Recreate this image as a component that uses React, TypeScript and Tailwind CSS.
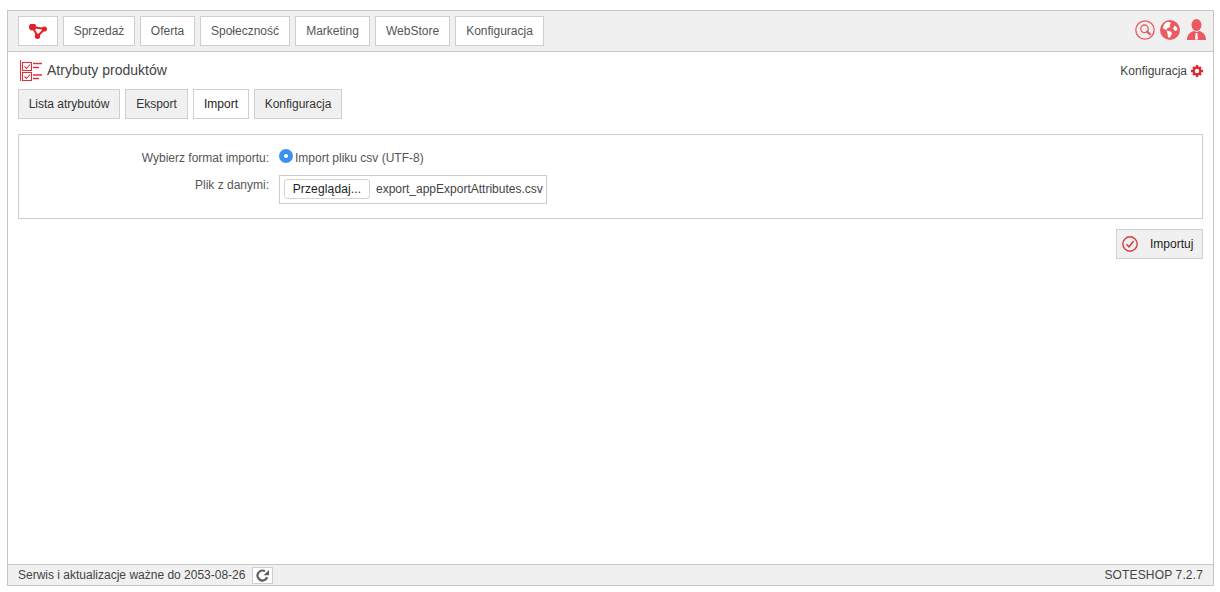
import React from 'react'

const navItems = [
  { label: 'Sprzedaż', width: 'w-[72px]' },
  { label: 'Oferta', width: 'w-[55px]' },
  { label: 'Społeczność', width: 'w-[90px]' },
  { label: 'Marketing', width: 'w-[75px]' },
  { label: 'WebStore', width: 'w-[75px]' },
  { label: 'Konfiguracja', width: 'w-[89px]' },
]

const tabs = [
  { label: 'Lista atrybutów', width: 'w-[102px]', active: false },
  { label: 'Eksport', width: 'w-[63px]', active: false },
  { label: 'Import', width: 'w-[56px]', active: true },
  { label: 'Konfiguracja', width: 'w-[88px]', active: false },
]

const LogoIcon = () => (
  <svg width="18" height="15" viewBox="0 0 18 15">
    <path d="M3.6 3 L15.6 5 L8.5 12.3 Z" fill="none" stroke="#e4202c" strokeWidth="2" />
    <circle cx="3.6" cy="3" r="3.6" fill="#e4202c" />
    <circle cx="15.4" cy="5" r="2.6" fill="#e4202c" />
    <circle cx="8.5" cy="12.3" r="2.7" fill="#e4202c" />
  </svg>
)

const AttributesIcon = () => (
  <svg width="23" height="22" viewBox="0 0 23 22" fill="none" stroke="#d9343c">
    <path d="M1.5 0 V21" strokeWidth="1" />
    <rect x="3.5" y="2.5" width="9" height="8" strokeWidth="1.1" />
    <rect x="3.5" y="12.5" width="9" height="8" strokeWidth="1.1" />
    <path d="M5.5 6.5 L7.5 8.5 L11 4.5 M5.5 16.5 L7.5 18.5 L11 14.5" strokeWidth="1.1" />
    <path d="M14 3.5 H23 M14 7.5 H20 M14 15 H23 M14 18.5 H20" strokeWidth="1.3" />
  </svg>
)

const SearchIcon = () => (
  <svg width="20" height="20" viewBox="0 0 20 20" fill="none" stroke="#ea5a60">
    <circle cx="10" cy="10" r="9.2" strokeWidth="1.3" />
    <circle cx="9.5" cy="8.8" r="3.8" strokeWidth="1.3" />
    <path d="M12.3 11.6 L15 14.3" strokeWidth="2.2" strokeLinecap="round" />
  </svg>
)

const GlobeIcon = () => (
  <svg width="20" height="20" viewBox="0 0 20 20">
    <circle cx="10" cy="10" r="10" fill="#ea5a60" />
    <path d="M6 2.5 C8 1.8 10 2 11 3 L9.5 5.5 L10.5 7 L7.5 8 L6.5 10 L3 8.5 C3 6 4 4 6 2.5 Z M6.5 10.5 L11 11.5 L12 13.5 L10 17.5 L8 17.5 L7.5 13.5 Z M14.5 5.5 L17 7.5 L17.5 10 L15 11 L13 8.5 Z" fill="#fff" />
  </svg>
)

const UserIcon = () => (
  <svg width="19" height="21" viewBox="0 0 19 21">
    <ellipse cx="9.5" cy="6" rx="5" ry="6" fill="#ea5a60" />
    <path d="M0 21 C0 15.5 3 13.5 6.5 12 L9.5 13 L12.5 12 C16 13.5 19 15.5 19 21 Z" fill="#ea5a60" />
    <path d="M8.7 14 H10.3 L11 20 L9.5 21 L8 20 Z" fill="#fff" />
  </svg>
)

const GearIcon = () => (
  <svg width="12" height="12" viewBox="0 0 13 13">
    <circle cx="6.5" cy="6.5" r="3.6" fill="none" stroke="#e0252d" strokeWidth="2.4" />
    <path d="M5.2 0 H7.8 V3 H5.2 Z M5.2 10 H7.8 V13 H5.2 Z M0 5.2 H3 V7.8 H0 Z M10 5.2 H13 V7.8 H10 Z M1.3 3.1 L3.1 1.3 L5 3.2 L3.2 5 Z M8 9.8 L9.8 8 L11.7 9.9 L9.9 11.7 Z M9.9 1.3 L11.7 3.1 L9.8 5 L8 3.2 Z M3.2 8 L5 9.8 L3.1 11.7 L1.3 9.9 Z" fill="#e0252d" />
  </svg>
)

const CheckIcon = () => (
  <svg width="16" height="16" viewBox="0 0 16 16" fill="none" stroke="#dc3a42">
    <circle cx="8" cy="8" r="7.2" strokeWidth="1.4" />
    <path d="M4.5 8.2 L7 10.8 L11.5 5.2" strokeWidth="1.5" />
  </svg>
)

const RefreshIcon = () => (
  <svg width="13" height="13" viewBox="0 0 13 13" fill="none">
    <path d="M11.2 8.2 A5 5 0 1 1 9 2.2" stroke="#606060" strokeWidth="2.2" />
    <path d="M7.5 6.2 H13 V1 Z" fill="#606060" />
  </svg>
)

export default function App() {
  return (
    <div className="h-[592px] w-[1220px] bg-white pt-[10px] pr-[6px] pb-[6px] pl-[7px] font-['Liberation_Sans',Arial,sans-serif] text-[12px] text-[#333]">
      <div className="flex h-full flex-col border border-[#c6c6c6]">
        <header className="flex h-[41px] shrink-0 items-start justify-between border-b border-[#c6c6c6] bg-[#f0f0f0] pt-[5px] pr-[7px] pl-[10px]">
          <nav className="flex gap-[5px]">
            <div className="flex h-[30px] w-[40px] items-center justify-center border border-[#cfcfcf] bg-white">
              <LogoIcon />
            </div>
            {navItems.map((item) => (
              <div
                key={item.label}
                className={`flex h-[30px] items-center justify-center border border-[#cfcfcf] bg-white text-[#555] ${item.width}`}
              >
                {item.label}
              </div>
            ))}
          </nav>
          <div className="flex items-center pt-[3px]">
            <SearchIcon />
            <div className="mr-[7px] ml-[5px]">
              <GlobeIcon />
            </div>
            <UserIcon />
          </div>
        </header>

        <main className="flex min-h-0 flex-1 flex-col px-[10px]">
          <div className="flex h-[37px] shrink-0 items-center justify-between">
            <div className="flex items-center gap-[5px]">
              <div className="ml-[1px]">
                <AttributesIcon />
              </div>
              <h1 className="text-[14px] font-normal text-[#444]">Atrybuty produktów</h1>
            </div>
            <div className="flex items-center gap-[4px] text-[#444]">
              Konfiguracja
              <GearIcon />
            </div>
          </div>

          <div className="flex shrink-0 gap-[5px]">
            {tabs.map((tab) => (
              <div
                key={tab.label}
                className={`flex h-[30px] items-center justify-center border border-[#cfcfcf] ${tab.width} ${
                  tab.active ? 'bg-white text-[#222]' : 'bg-[#f0f0f0] text-[#333]'
                }`}
              >
                {tab.label}
              </div>
            ))}
          </div>

          <section className="mt-[15px] flex h-[85px] shrink-0 flex-col border border-[#cccccc] pt-[14px]">
            <div className="flex h-[26px] items-start">
              <div className="w-[250px] text-right text-[#555]">Wybierz format importu:</div>
              <div className="ml-[10px] flex items-start gap-[2px] text-[#555]">
                <span className="flex h-[14px] w-[14px] items-center justify-center rounded-full bg-[#3b92f0]">
                  <span className="h-[4px] w-[4px] rounded-full bg-white" />
                </span>
                <span>Import pliku csv (UTF-8)</span>
              </div>
            </div>
            <div className="flex items-start">
              <div className="w-[250px] pt-[1px] text-right text-[#555]">Plik z danymi:</div>
              <div className="ml-[10px] flex h-[29px] w-[268px] items-center gap-[6px] border border-[#cccccc] pb-[1px] pl-[4px]">
                <div className="flex h-[20px] w-[86px] items-center justify-center rounded-[3px] border border-[#d4d4d4] bg-white tracking-[0.15px] text-[#222]">
                  Przeglądaj...
                </div>
                <span className="text-[#444]">export_appExportAttributes.csv</span>
              </div>
            </div>
          </section>

          <div className="mt-[10px] flex shrink-0 justify-end">
            <div className="flex h-[30px] w-[87px] items-center border border-[#cfcfcf] bg-[#f0f0f0] pl-[5px] text-[#222]">
              <CheckIcon />
              <span className="ml-[12px]">Importuj</span>
            </div>
          </div>
        </main>

        <footer className="flex h-[21px] shrink-0 items-center justify-between border-t border-[#c6c6c6] bg-[#f0f0f0] pr-[10px] pl-[10px] text-[#444]">
          <div className="flex items-center gap-[7px]">
            <span>Serwis i aktualizacje ważne do 2053-08-26</span>
            <span className="flex h-[17px] w-[21px] items-center justify-center border border-[#cfcfcf] bg-white">
              <RefreshIcon />
            </span>
          </div>
          <span className="tracking-[0.15px]">SOTESHOP 7.2.7</span>
        </footer>
      </div>
    </div>
  )
}
